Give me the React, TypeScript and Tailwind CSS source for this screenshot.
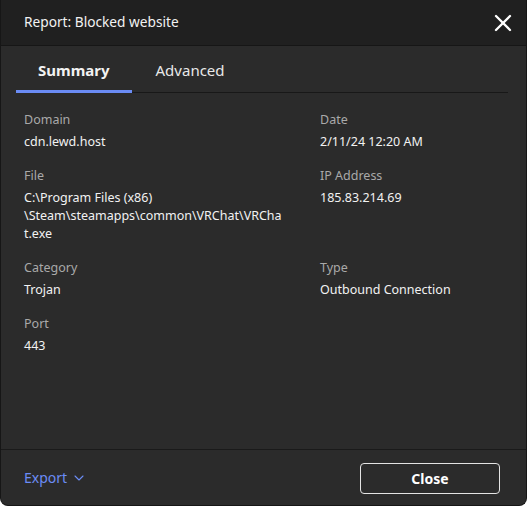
import { X, ChevronDown } from "lucide-react";

const items = [
  { label: "Domain", value: "cdn.lewd.host" },
  { label: "Date", value: "2/11/24 12:20 AM" },
  { label: "File", value: "C:\\Program Files (x86) \\Steam\\steamapps\\common\\VRChat\\VRChat.exe" },
  { label: "IP Address", value: "185.83.214.69" },
  { label: "Category", value: "Trojan" },
  { label: "Type", value: "Outbound Connection" },
  { label: "Port", value: "443" },
];

export default function App() {
  return (
    <div
      className="w-[527px] h-[506px] flex flex-col bg-[#2b2b2b] border border-t-0 border-[#161616] rounded-b-lg overflow-hidden text-[#f2f2f2]"
      style={{ fontFamily: '"Noto Sans", "Open Sans", sans-serif' }}
    >
      {/* Title bar */}
      <div className="h-[46px] shrink-0 flex items-center justify-between pl-[23px] pr-[9px] bg-[#202020] border-b border-[#161616]">
        <span className="text-[13.7px]">Report: Blocked website</span>
        <button className="text-white">
          <X className="w-7 h-7" strokeWidth={2} />
        </button>
      </div>

      {/* Tabs */}
      <div className="ml-[15px] mr-[18px] mt-[6px] flex border-b border-[#181818]">
        <div className="px-[22px] pt-[7px] pb-[8px] border-b-[3px] border-[#6b8cf5] -mb-px text-[15px] font-bold">
          Summary
        </div>
        <div className="ml-6 pt-[7px] pb-[8px] text-[15px] text-[#e8e8e8]">Advanced</div>
      </div>

      {/* Details */}
      <div className="flex-1 grid grid-cols-[272px_1fr] gap-x-6 gap-y-4 content-start px-[23px] pt-[18px] text-[12.5px] leading-[18px]">
        {items.map((item) => (
          <div key={item.label} className="flex flex-col gap-1">
            <span className="text-[#a9a9a9]">{item.label}</span>
            <span className={item.label === "File" ? "max-w-[260px] [overflow-wrap:anywhere]" : ""}>
              {item.value}
            </span>
          </div>
        ))}
      </div>

      {/* Footer */}
      <div className="h-[56px] shrink-0 flex items-center justify-between pl-[23px] pr-[26px] border-t border-[#1a1a1a]">
        <button className="flex items-center gap-1 text-[14px] text-[#6b8cf5]">
          Export
          <ChevronDown className="w-4 h-4" strokeWidth={1.6} />
        </button>
        <button className="w-[140px] h-[31px] mt-[2px] rounded border border-[#e4e4e4] text-[14px] font-bold text-white">
          Close
        </button>
      </div>
    </div>
  );
}
